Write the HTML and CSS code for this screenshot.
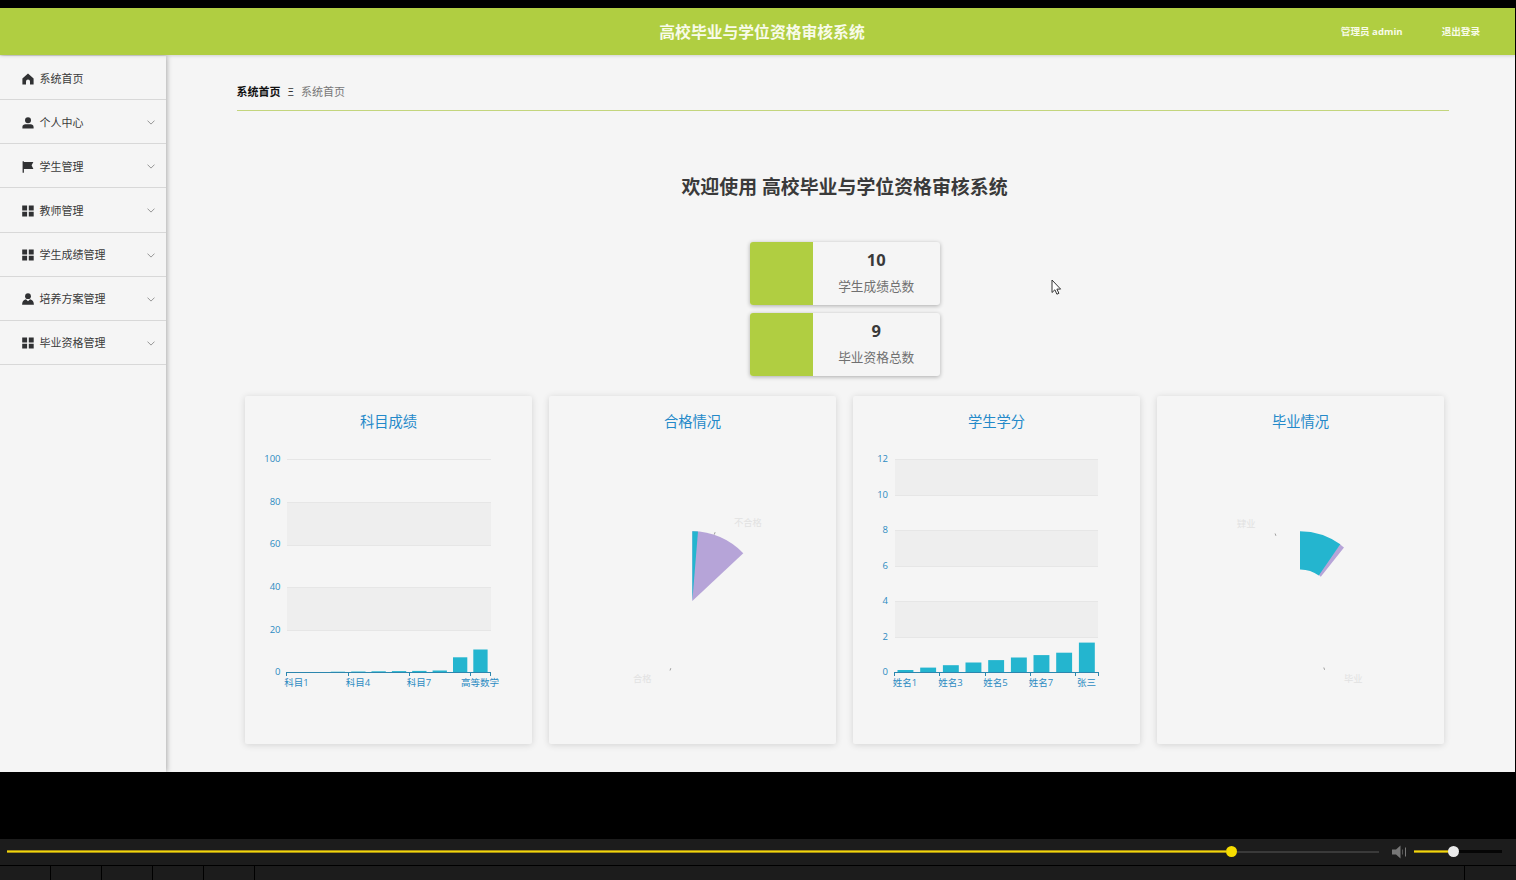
FILE: index.html
```html
<!DOCTYPE html>
<html lang="zh-CN">

<head>
    <meta charset="UTF-8">
    <meta name="viewport" content="width=device-width, initial-scale=1.0">
    <title>高校毕业与学位资格审核系统</title>
    <link rel="stylesheet" href="styles.css">
</head>

<body>
    <!-- shared menu icons -->
    <svg class="sprite" width="0" height="0">
        <symbol id="icon-home" viewBox="0 0 12 12">
            <path d="M6 .4 11.6 5.6V11.4H8V8.6a2 2 0 0 0-4 0v2.8H.4V5.6z" />
        </symbol>
        <symbol id="icon-user" viewBox="0 0 12 12">
            <circle cx="6" cy="3.3" r="3" />
            <path d="M.4 11.6V10c0-1.8 1.4-2.700 3-2.700h5.200c1.600 0 3 .9 3 2.700v1.600z" />
        </symbol>
        <symbol id="icon-flag" viewBox="0 0 12 12">
            <path d="M.6.3h1.300v.6H11.400L9.600 4.200l1.800 3.800H1.900v3.800H.6z" />
        </symbol>
        <symbol id="icon-grid" viewBox="0 0 12 12">
            <path d="M.2.6h4.900v4.800H.2zM6.800.6h4.900v4.800H6.800zM.2 6.800h4.900v4.800H.2zM6.800 6.800h4.900v4.800H6.800z" />
        </symbol>
        <symbol id="icon-custom" viewBox="0 0 12 12">
            <circle cx="6" cy="3.2" r="2.900" />
            <path d="M.1 11.700c0-3 1.300-4.700 3.800-5.400L6 8.300l2.100-2c2.500.7 3.800 2.400 3.800 5.400z" />
        </symbol>
        <symbol id="icon-arrow" viewBox="0 0 8 5">
            <path d="M.5.6 4 4.100 7.500.6" fill="none" stroke="#8c8c8c" stroke-width="0.900" />
        </symbol>
    </svg>

    <div class="screen">
        <header class="header">
            <h1 class="header-title">高校毕业与学位资格审核系统</h1>
            <div class="header-right">
                <span>管理员 admin</span>
                <span>退出登录</span>
            </div>
        </header>

        <div class="content">
            <ul class="sidebar">
                <li class="menu-item"><svg class="menu-icon"><use href="#icon-home" /></svg><span>系统首页</span></li>
                <li class="menu-item"><svg class="menu-icon"><use href="#icon-user" /></svg><span>个人中心</span><svg class="arrow"><use href="#icon-arrow" /></svg></li>
                <li class="menu-item"><svg class="menu-icon"><use href="#icon-flag" /></svg><span>学生管理</span><svg class="arrow"><use href="#icon-arrow" /></svg></li>
                <li class="menu-item"><svg class="menu-icon"><use href="#icon-grid" /></svg><span>教师管理</span><svg class="arrow"><use href="#icon-arrow" /></svg></li>
                <li class="menu-item"><svg class="menu-icon"><use href="#icon-grid" /></svg><span>学生成绩管理</span><svg class="arrow"><use href="#icon-arrow" /></svg></li>
                <li class="menu-item"><svg class="menu-icon"><use href="#icon-custom" /></svg><span>培养方案管理</span><svg class="arrow"><use href="#icon-arrow" /></svg></li>
                <li class="menu-item"><svg class="menu-icon"><use href="#icon-grid" /></svg><span>毕业资格管理</span><svg class="arrow"><use href="#icon-arrow" /></svg></li>
            </ul>

            <main class="main">
                <nav class="breadcrumb">
                    <b>系统首页</b>
                    <span class="separator">Ξ</span>
                    <span>系统首页</span>
                </nav>

                <h2 class="welcome">欢迎使用 高校毕业与学位资格审核系统</h2>

                <div class="stats">
                    <div class="stat">
                        <div class="stat-color"></div>
                        <div class="stat-text">
                            <strong>10</strong>
                            <span>学生成绩总数</span>
                        </div>
                    </div>
                    <div class="stat">
                        <div class="stat-color"></div>
                        <div class="stat-text">
                            <strong>9</strong>
                            <span>毕业资格总数</span>
                        </div>
                    </div>
                </div>

                <div class="charts">
                    <svg class="chart" viewBox="0 0 287 348">
                        <text class="chart-title" x="143.5" y="31">科目成绩</text>
                        <path class="band" d="M42 106h204v43H42zM42 191h204v43H42z" />
                        <path class="grid-line" d="M42 63.5h204M42 106.5h204M42 149.5h204M42 191.5h204M42 234.5h204" />
                        <g class="y-label">
                            <text x="35.5" y="66">100</text>
                            <text x="35.5" y="108.5">80</text>
                            <text x="35.5" y="151">60</text>
                            <text x="35.5" y="194">40</text>
                            <text x="35.5" y="236.5">20</text>
                            <text x="35.5" y="279">0</text>
                        </g>
                        <g class="bar">
                            <rect x="65.4" y="276" width="14.3" height="1" />
                            <rect x="85.8" y="275.7" width="14.3" height="1.3" />
                            <rect x="106.2" y="275.5" width="14.3" height="1.5" />
                            <rect x="126.5" y="275.3" width="14.3" height="1.7" />
                            <rect x="146.9" y="275.1" width="14.3" height="1.9" />
                            <rect x="167.2" y="274.9" width="14.3" height="2.1" />
                            <rect x="187.6" y="274.5" width="14.3" height="2.5" />
                            <rect x="208" y="261.3" width="14.3" height="15.7" />
                            <rect x="228.3" y="253.5" width="14.3" height="23.5" />
                        </g>
                        <path class="axis" d="M41.5 276.5h204M41.5 276v4M103.5 276v4M164.5 276v4M225.5 276v4M245.5 276v4" />
                        <g class="x-label">
                            <text x="51.5" y="290">科目1</text>
                            <text x="113" y="290">科目4</text>
                            <text x="174" y="290">科目7</text>
                            <text x="235" y="290">高等数学</text>
                        </g>
                    </svg>

                    <svg class="chart" viewBox="0 0 287 348">
                        <text class="chart-title" x="143.5" y="31">合格情况</text>
                        <path class="slice-b" d="M143.3 205V135.2A70 70 0 0 1 194.3 157.2z" />
                        <path class="slice-a" d="M143.3 205V135.2A70 70 0 0 1 149 135.4z" />
                        <path class="label-line" d="M165.3 138.5l.8-2.3M121 274.5l.8-2.3" />
                        <text class="pie-label" x="185" y="129.5">不合格</text>
                        <text class="pie-label" x="84" y="285.5">合格</text>
                    </svg>

                    <svg class="chart" viewBox="0 0 287 348">
                        <text class="chart-title" x="143.5" y="31">学生学分</text>
                        <path class="band" d="M42 64h203v35H42zM42 134h203v36H42zM42 205h203v36H42z" />
                        <path class="grid-line" d="M42 63.5h203M42 99.5h203M42 134.5h203M42 170.5h203M42 205.5h203M42 241.5h203" />
                        <g class="y-label">
                            <text x="35" y="66">12</text>
                            <text x="35" y="101.5">10</text>
                            <text x="35" y="137">8</text>
                            <text x="35" y="172.5">6</text>
                            <text x="35" y="208">4</text>
                            <text x="35" y="243.5">2</text>
                            <text x="35" y="279">0</text>
                        </g>
                        <g class="bar">
                            <rect x="44.5" y="274" width="15.9" height="3" />
                            <rect x="67.2" y="271.6" width="15.9" height="5.4" />
                            <rect x="89.9" y="269.2" width="15.9" height="7.8" />
                            <rect x="112.5" y="266.5" width="15.9" height="10.5" />
                            <rect x="135.2" y="264.1" width="15.9" height="12.9" />
                            <rect x="157.9" y="261.5" width="15.9" height="15.5" />
                            <rect x="180.5" y="259.1" width="15.9" height="17.9" />
                            <rect x="203.2" y="256.7" width="15.9" height="20.3" />
                            <rect x="225.9" y="246.6" width="15.9" height="30.4" />
                        </g>
                        <path class="axis" d="M41.5 276.5h204M41.5 276v4M86.5 276v4M132.5 276v4M177.5 276v4M222.5 276v4M245.5 276v4" />
                        <g class="x-label">
                            <text x="52" y="290">姓名1</text>
                            <text x="97.5" y="290">姓名3</text>
                            <text x="142.5" y="290">姓名5</text>
                            <text x="188" y="290">姓名7</text>
                            <text x="233.5" y="290">张三</text>
                        </g>
                    </svg>

                    <svg class="chart" viewBox="0 0 287 348">
                        <text class="chart-title" x="143.5" y="31">毕业情况</text>
                        <path class="slice-b" d="M183 148.2A70 70 0 0 1 187 151.6L163.8 180.8A31 31 0 0 0 161 178.5z" />
                        <path class="slice-a" d="M143 135.2A70 70 0 0 1 183.3 148.3L161.8 179.5A31 31 0 0 0 143 173.5z" />
                        <path class="label-line" d="M118.9 139.8l-.8-2.3M167.6 273.8l-.8-2.3" />
                        <text class="pie-label" x="80" y="131">肄业</text>
                        <text class="pie-label" x="187" y="285.5">毕业</text>
                    </svg>
                </div>
            </main>
        </div>

        <svg class="cursor" width="11" height="17" viewBox="0 0 11 17">
            <path d="M1 1v12.500l2.900-2.700 2 4.400 2-.9-2-4.200h3.700z" fill="#fff" stroke="#333" stroke-width="1" />
        </svg>
    </div>

    <div class="player">
        <div class="player-bar">
            <div class="progress"><span class="played"></span><span class="knob"></span></div>
            <svg class="speaker" width="15" height="14" viewBox="0 0 15 14">
                <path d="M0 4.500h4L8.500.5v13L4 9.500H0z" fill="#777" />
                <path d="M10.500 4.500v5" stroke="#555" />
                <path d="M13.500 2.500v9" stroke="#777" />
            </svg>
            <div class="volume"><span class="played"></span><span class="knob"></span></div>
        </div>
        <div class="player-buttons">
            <span></span><span></span><span></span><span></span><span></span>
            <span class="filler"></span>
            <span class="last"></span>
        </div>
    </div>
</body>

</html>
```
FILE: styles.css
```css
:root {
    --green: #b0ce41;
    --page: #f5f5f5;
    --teal: #24b5cf;
    --purple: #b6a4d8;
    --blue: #2c8bc2;
}

* {
    box-sizing: border-box;
}

body {
    margin: 0;
    height: 880px;
    padding-top: 8px;
    display: flex;
    flex-direction: column;
    overflow: hidden;
    background: #000;
    color: #3a3a3a;
    font-family: "Open Sans", "Noto Sans CJK SC", sans-serif;
}

.sprite {
    position: absolute;
}

.screen {
    position: relative;
    width: 1515px;
    height: 764px;
    background: var(--page);
    overflow: hidden;
}

/* header */
.header {
    position: relative;
    z-index: 1;
    height: 47px;
    display: grid;
    grid-template-columns: 1fr auto 1fr;
    align-items: center;
    padding: 1px 35px 0 44px;
    background: var(--green);
    color: #f8fbe9;
    box-shadow: 0 1px 3px rgba(0, 0, 0, 0.15);
}

.header-title {
    grid-column: 2;
    margin: 0;
    font-size: 15.8px;
    line-height: 24px;
    font-weight: 700;
}

.header-right {
    display: flex;
    justify-content: flex-end;
    gap: 39px;
    font-size: 9.6px;
    line-height: 16px;
    font-weight: 700;
}

.content {
    display: flex;
    height: 717px;
    padding-top: 1px;
}

/* sidebar */
.sidebar {
    width: 166px;
    flex-shrink: 0;
    margin: 0;
    padding: 0;
    list-style: none;
    box-shadow: 1px 0 5px rgba(0, 0, 0, 0.3);
}

.menu-item {
    display: flex;
    align-items: center;
    height: 44.15px;
    padding: 2px 11px 0 22px;
    border-bottom: 1px solid #d8d8d8;
    font-size: 11px;
    line-height: 16px;
}

.menu-icon {
    width: 12px;
    height: 12px;
    margin-right: 5.5px;
    fill: #303133;
}

.arrow {
    width: 8px;
    height: 5px;
    margin-left: auto;
}

/* main */
.main {
    flex: 1;
    padding: 22px 66.5px 0 70.5px;
}

.breadcrumb {
    display: flex;
    align-items: center;
    height: 33px;
    padding-bottom: 4px;
    border-bottom: 1px solid #c3d57d;
    font-size: 11px;
    line-height: 16px;
    color: #777;
}

.breadcrumb b {
    color: #111;
}

.separator {
    width: 20.5px;
    text-align: center;
    color: #333;
}

.welcome {
    margin: 62px 0 0;
    padding-left: 4px;
    font-size: 18.9px;
    line-height: 28px;
    font-weight: 700;
    text-align: center;
}

.stats {
    display: flex;
    flex-direction: column;
    align-items: center;
    gap: 8px;
    padding-left: 4px;
    margin-top: 41px;
}

.stat {
    display: flex;
    width: 190px;
    height: 63px;
    border-radius: 3px;
    overflow: hidden;
    box-shadow: 0 1px 4px rgba(0, 0, 0, 0.3);
}

.stat-color {
    width: 63.5px;
    background: var(--green);
}

.stat-text {
    flex: 1;
    display: flex;
    flex-direction: column;
    align-items: center;
    padding-top: 6px;
}

.stat-text strong {
    font-size: 16.5px;
    line-height: 24px;
}

.stat-text span {
    margin-top: 4px;
    font-size: 12.7px;
    line-height: 20px;
    color: #707070;
}

/* charts */
.charts {
    display: grid;
    grid-template-columns: repeat(4, 287px);
    gap: 17px;
    margin: 20px 0 0 8.5px;
}

.chart {
    width: 287px;
    height: 348px;
    border-radius: 2px;
    background: var(--page);
    box-shadow: 0 1px 7px rgba(0, 0, 0, 0.14);
}

.chart-title {
    font-size: 14.3px;
    fill: #2489c9;
    text-anchor: middle;
}

.band {
    fill: #eee;
}

.grid-line {
    stroke: #e6e6e6;
}

.axis {
    fill: none;
    stroke: #2c86ae;
}

.bar {
    fill: var(--teal);
}

.y-label,
.x-label {
    font-size: 9.5px;
    fill: var(--blue);
}

.y-label {
    text-anchor: end;
}

.x-label {
    text-anchor: middle;
}

.slice-a {
    fill: var(--teal);
}

.slice-b {
    fill: var(--purple);
}

.label-line {
    stroke: #888;
    stroke-width: 0.8;
}

.pie-label {
    font-size: 9.3px;
    fill: #e2e2e2;
}

.cursor {
    position: absolute;
    left: 1051px;
    top: 271px;
}

/* player */
.player {
    margin-top: 67px;
    height: 41px;
    background: #1c1c1c;
}

.player-bar {
    display: flex;
    align-items: center;
    height: 26px;
    padding: 0 14px 1px 7px;
}

.progress,
.volume {
    display: flex;
    align-items: center;
    height: 2px;
    background: #3a3a3a;
}

.progress {
    width: 1373px;
}

.volume {
    width: 88px;
    height: 3px;
    background: #050505;
}

.played {
    width: 1219px;
    height: 3px;
    background: #f0d80c;
    border: solid #a58c12;
    border-width: 1px 0;
}

.volume .played {
    width: 35px;
}

.knob {
    width: 11px;
    height: 11px;
    flex-shrink: 0;
    border-radius: 50%;
    background: #f6dc00;
}

.volume .knob {
    margin-left: -1px;
    background: #eaeaea;
}

.speaker {
    flex-shrink: 0;
    margin: 0 7px 0 13px;
}

.player-buttons {
    display: flex;
    height: 15px;
    border-top: 1px solid #000;
}

.player-buttons span {
    width: 51px;
    border-right: 1px solid #000;
}

.player-buttons .filler {
    flex: 1;
}

.player-buttons .last {
    border: 0;
}
```
